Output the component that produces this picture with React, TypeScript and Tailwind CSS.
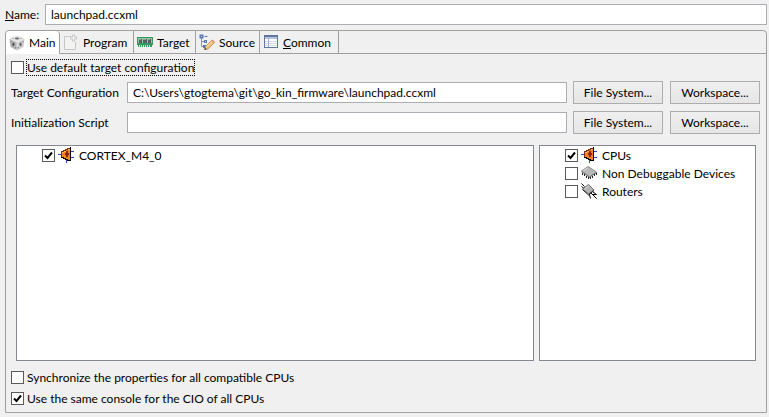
import { useId, useState } from 'react';
import type { ReactNode } from 'react';
import clsx from 'clsx';

const CubeIcon = () => (
    <svg width="16" height="16" viewBox="0 0 16 16" className="shrink-0">
        <path d="M8 0.5 15.5 3.5 8 7 0.5 3.5Z" fill="#e2e2e2" />
        <path d="M0.5 3.5 8 7V15.5L1.5 12Z" fill="#b4b4b4" />
        <path d="M15.5 3.5 8 7V15.5L14.5 12Z" fill="#cfcfcf" />
        <path d="M0.5 3.5 8 7 15.5 3.5M8 7V15.5" fill="none" stroke="#efefef" strokeWidth="0.8" />
        <ellipse cx="8" cy="3.5" rx="2.2" ry="1" fill="#6a6a6a" />
        <ellipse cx="4.4" cy="9.3" rx="1.1" ry="1.9" fill="#555" />
        <ellipse cx="11.6" cy="9.3" rx="1.1" ry="1.9" fill="#666" />
        <path d="M2 6.2V7.4M6.8 12V13.4M9.2 12V13.4M14 6.2V7.4M3.5 3.2H4.5M11.5 3.2H12.5" stroke="#777" />
    </svg>
);

const PageIcon = () => (
    <svg width="16" height="16" viewBox="0 0 16 16" className="shrink-0">
        <path d="M1.5 2.5H8.5L12.5 7V15.5H1.5Z" fill="#f3f3f1" />
        <path d="M8 2.5H1.5V15.5H12.5V8" fill="none" stroke="#c6c6c4" />
        <path d="M10.5 0.5V7.5M7 4H14" stroke="#c8c8c8" strokeWidth="3" />
        <path d="M10.5 1.5V6.5M8 4H13" stroke="#f8f8f8" />
    </svg>
);

const BoardIcon = () => (
    <svg width="16" height="16" viewBox="0 0 16 16" shapeRendering="crispEdges" className="shrink-0">
        <path d="M0 3H16V11H15V13H1V11H0Z" fill="#3b9464" />
        <path d="M1 4H15V9H1Z" fill="#8cc9a3" />
        <path d="M2 5H5V9H2ZM6 5H10V9H6ZM11 5H14V9H11Z" fill="#59605c" />
        <path d="M2 5H4V6H2ZM6 5H9V6H6ZM11 5H13V6H11Z" fill="#9a9f9b" />
        <path d="M2 12H14" stroke="#e4e0a0" strokeWidth="2" strokeDasharray="1 1" />
    </svg>
);

const SourceIcon = () => (
    <svg width="16" height="16" viewBox="0 0 16 16" className="shrink-0">
        <path d="M2.5 3V12.5H5M2.5 7.5H5" fill="none" stroke="#7b97c4" />
        <path d="M0.5 0.5H4.5V4.5H0.5ZM5 6H8V9H5ZM4 11H7V14H4Z" fill="#5878ab" />
        <path d="M2 2H3V3H2ZM6 7H7V8H6Z" fill="#cfdcf0" />
        <path d="M5.5 2.5H8.5" stroke="#5878ab" />
        <path d="M6.5 12.5 13 6 15.5 8.5 9 15 6 15.5Z" fill="#f1bd76" stroke="#c48b4c" strokeWidth="0.8" />
        <path d="M7 13.5 13.5 7.2" stroke="#fbe2b8" />
        <path d="M5 16 6 13.5 8 15.3Z" fill="#5b4a3a" />
        <path d="M13 6 15.5 8.5" stroke="#d98d7c" strokeWidth="1.5" />
    </svg>
);

const TableIcon = () => (
    <svg width="16" height="16" viewBox="0 0 16 16" shapeRendering="crispEdges" className="shrink-0">
        <path d="M1.5 1.5H14.5V13.5H1.5Z" fill="#fff" stroke="#60769a" />
        <path d="M1 1H15V3H1Z" fill="#60769a" />
        <path d="M2 3H14V5H2Z" fill="#b3c3dc" />
        <path d="M2 7.5H14M2 9.5H14M2 11.5H14" stroke="#d5dde9" />
        <path d="M5.5 4V13" stroke="#9fb1cd" />
    </svg>
);

const CpuIcon = () => (
    <svg width="16" height="16" viewBox="0 0 16 16" shapeRendering="crispEdges" className="shrink-0">
        <path d="M0 7.5H3M13 4.5H16M13 10.5H16M8.5 13V16" stroke="#2448c8" />
        <path d="M3 4H5V3H7V2H9V1H12V14H9V13H7V12H5V11H3Z" fill="#f58220" />
        <path d="M3.5 11V4.5H5.5V3.5H7.5V2.5H9.5V1.5H12" fill="none" stroke="#7a3410" />
        <path d="M12.5 0V14M3 10.5H5.5V11.5H7.5V12.5H9.5V13.5H13" fill="none" stroke="#000" />
        <path d="M4 5H6V6H4ZM6 4H8V5H6ZM10 2H12V3H10Z" fill="#ffb45a" />
        <path d="M8 4H10V6H11V8H10V10H8V8H7V6H8Z" fill="#8c2408" />
    </svg>
);

const ChipIcon = () => (
    <svg width="16" height="16" viewBox="0 0 16 16" className="shrink-0">
        <path
            d="M1.5 7.5V9.5M3.5 9V11M5.5 10.5V12.5M7.5 12V14M9.5 11.5V13.5M11.5 10.5V12.5M13.5 9V11M15.5 8V10"
            stroke="#222"
            shapeRendering="crispEdges"
        />
        <path d="M0.5 6 7 1.5 15.5 7 8.5 12Z" fill="#b8b8b8" stroke="#777" strokeWidth="0.8" />
        <path d="M0.5 6.5 8.5 12.3 15.5 7.5" fill="none" stroke="#555" strokeWidth="0.8" />
        <path d="M2 6 7 2.7" stroke="#dcdcdc" />
    </svg>
);

const RouterIcon = () => (
    <svg width="16" height="16" viewBox="0 0 16 16" className="shrink-0">
        <path
            d="M0.5 0.5 3.5 3.5M0.5 3.5 3 5.5M9 9 15.5 15.5M11.5 8.5 15.5 11.5M8 10 9.5 15.5M12 11.5H15.5"
            fill="none"
            stroke="#000"
        />
        <path d="M1.5 6 7.5 1.5 13 7 7.5 11Z" fill="#b4b4b4" stroke="#555" strokeWidth="0.8" />
        <path d="M1.5 6.5 7.5 12 13 7.5" fill="none" stroke="#222" />
        <path d="M3.5 6 7.5 3" stroke="#e0e0e0" />
    </svg>
);

type CheckProps = {
    label: ReactNode;
    icon?: ReactNode;
    checked?: boolean;
    outlined?: boolean;
};

const CheckItem = ({ label, icon, checked = false, outlined = false }: CheckProps) => {
    const id = useId();
    const [on, setOn] = useState(checked);

    return (
        <div className="flex h-[18px] items-center gap-[3px]">
            <span className="relative flex size-[13px] shrink-0">
                <input
                    id={id}
                    type="checkbox"
                    checked={on}
                    onChange={(e) => setOn(e.target.checked)}
                    className="size-[13px] appearance-none border border-[#5a5a5a] bg-white"
                />
                {on && (
                    <svg viewBox="0 0 13 13" className="pointer-events-none absolute inset-0 size-[13px]">
                        <path d="M3 6.5 5.5 9 10 3.5" fill="none" stroke="#000" strokeWidth="2" />
                    </svg>
                )}
            </span>
            {icon}
            <label
                htmlFor={id}
                className={clsx(
                    'whitespace-nowrap leading-[15px]',
                    icon && 'pl-[2px]',
                    outlined && 'outline-1 outline-dotted outline-black',
                )}
            >
                {label}
            </label>
        </div>
    );
};

const PushButton = ({ children }: { children: ReactNode }) => (
    <button
        type="button"
        className="h-[23px] w-[90px] shrink-0 border border-[#adadad] bg-linear-to-b from-[#f0f0f0] to-[#e5e5e5] leading-[20px]"
    >
        {children}
    </button>
);

const PathRow = ({ label, value = '' }: { label: string; value?: string }) => {
    const id = useId();

    return (
        <div className="flex items-center">
            <label htmlFor={id} className="w-[116px] shrink-0 whitespace-nowrap">
                {label}
            </label>
            <input
                id={id}
                type="text"
                defaultValue={value}
                className="h-[21px] min-w-0 flex-1 border border-[#abadb3] bg-white px-[5px]"
            />
            <div className="ml-1.5 flex gap-[7px]">
                <PushButton>File System...</PushButton>
                <PushButton>Workspace...</PushButton>
            </div>
        </div>
    );
};

const tabs = [
    { name: 'Main', icon: <CubeIcon />, width: 'w-[54px]' },
    { name: 'Program', icon: <PageIcon />, width: 'w-[74px]' },
    { name: 'Target', icon: <BoardIcon />, width: 'w-[62px]' },
    { name: 'Source', icon: <SourceIcon />, width: 'w-[64px]' },
    { name: 'Common', icon: <TableIcon />, width: 'w-[79px]', mnemonic: true },
];

export default function App() {
    const [active, setActive] = useState('Main');

    return (
        <div className="flex min-h-screen flex-col bg-[#f0f0f0] pt-1 pr-[2px] pb-1 pl-[5px] font-['Lato','Noto_Sans',sans-serif] text-[12px] leading-[15px] text-black">
            <div className="flex items-center">
                <label htmlFor="name" className="w-10 shrink-0">
                    <span className="underline">N</span>ame:
                </label>
                <input
                    id="name"
                    type="text"
                    defaultValue="launchpad.ccxml"
                    className="h-[21px] min-w-0 flex-1 border border-[#abadb3] bg-white px-[5px]"
                />
            </div>

            <div className="mt-[5px] flex flex-1 flex-col rounded-t border border-[#a0a0a0]">
                <div role="tablist" className="flex h-[23px]">
                    {tabs.map((tab) => (
                        <button
                            key={tab.name}
                            type="button"
                            role="tab"
                            aria-selected={active === tab.name}
                            onClick={() => setActive(tab.name)}
                            className={clsx(
                                'flex shrink-0 items-center gap-1 border-r border-[#a0a0a0] pl-[3px]',
                                tab.width,
                                active === tab.name ? 'rounded-t bg-white' : 'border-b',
                            )}
                        >
                            {tab.icon}
                            <span className={clsx(tab.mnemonic && 'first-letter:underline', 'inline-block')}>
                                {tab.name}
                            </span>
                        </button>
                    ))}
                    <div className="flex-1 border-b border-[#a0a0a0]" />
                </div>

                <div className="flex flex-1 flex-col pt-1 pr-[6px] pl-[5px]">
                    <CheckItem label="Use default target configuration" outlined />
                    <div className="mt-[5px] flex flex-col gap-[7px]">
                        <PathRow
                            label="Target Configuration"
                            value="C:\Users\gtogtema\git\go_kin_firmware\launchpad.ccxml"
                        />
                        <PathRow label="Initialization Script" />
                    </div>

                    <div className="mr-1 ml-[5px] mt-[11px] flex flex-1 gap-[5px]">
                        <div className="flex-1 border border-[#828790] bg-white pl-[25px]">
                            <CheckItem label="CORTEX_M4_0" icon={<CpuIcon />} checked />
                        </div>
                        <div className="w-[217px] shrink-0 border border-[#828790] bg-white pl-[25px]">
                            <CheckItem label="CPUs" icon={<CpuIcon />} checked />
                            <CheckItem label="Non Debuggable Devices" icon={<ChipIcon />} />
                            <CheckItem label="Routers" icon={<RouterIcon />} />
                        </div>
                    </div>

                    <div className="mt-[7px] mb-[5px] flex flex-col gap-[3px]">
                        <CheckItem label="Synchronize the properties for all compatible CPUs" />
                        <CheckItem label="Use the same console for the CIO of all CPUs" checked />
                    </div>
                </div>
            </div>
        </div>
    );
}
